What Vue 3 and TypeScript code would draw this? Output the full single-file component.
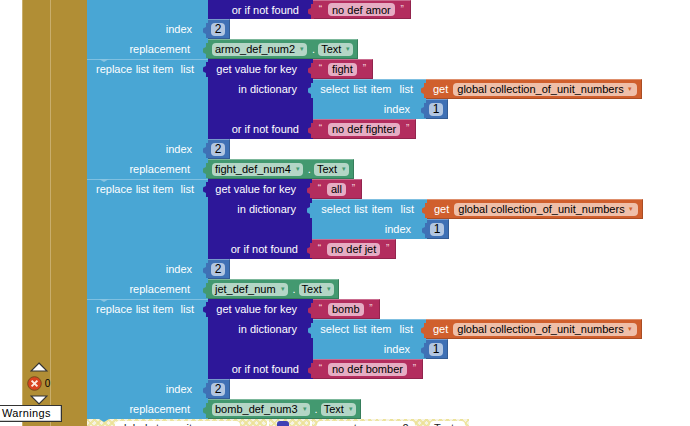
<script setup lang="ts">
interface Group {
  key: string;
  missing: string;
  field: string;
  dictWidth: number;
  selectWidth: number;
}

const groups: Group[] = [
  { key: 'fight', missing: 'no def fighter', field: 'fight_def_num4', dictWidth: 105, selectWidth: 113 },
  { key: 'all', missing: 'no def jet', field: 'jet_def_num', dictWidth: 104, selectWidth: 115 },
  { key: 'bomb', missing: 'no def bomber', field: 'bomb_def_num3', dictWidth: 105, selectWidth: 113 }
];

const tabPath = 'M7 0H4v3.5C4 5 1 4 1 6.5v2C1 11 4 10 4 11.5V15h3z';
</script>

<template>
  <div class="page">
    <div class="margin"></div>
    <div class="gold">
      <div class="gold-a"></div>
      <div class="gold-b"></div>
      <div class="warn-ctrl">
        <svg width="18" height="10" viewBox="0 0 18 10"><path d="M9 1 17 9H1z" fill="#fff" stroke="#333" stroke-width="1.2" /></svg>
        <div class="warn-count">
          <svg width="15" height="15" viewBox="0 0 15 15">
            <circle cx="7.5" cy="7.5" r="6.8" fill="#d8431f" stroke="#7c4a1c" />
            <path d="M4.6 4.6l5.8 5.8M10.4 4.6l-5.8 5.8" stroke="#fde8dc" stroke-width="2" />
          </svg>
          <span>0</span>
        </div>
        <svg width="18" height="10" viewBox="0 0 18 10"><path d="M1 1h16L9 9z" fill="#fff" stroke="#333" stroke-width="1.2" /></svg>
      </div>
      <div class="warn-tip">Warnings</div>
    </div>

    <div class="canvas">
      <div class="row top-row">
        <div class="label"></div>
        <div class="dict-end" style="width: 105px">
          <span class="dict-text">or if not found</span>
        </div>
        <div class="pink">
          <svg class="tab" viewBox="0 0 7 15"><path :d="tabPath" /></svg>
          <span class="quote">“</span><span class="field pink-field">no def amor</span><span class="quote">”</span>
        </div>
      </div>

      <div class="row">
        <div class="label">index</div>
        <div class="num">
          <svg class="tab" viewBox="0 0 7 15"><path :d="tabPath" /></svg>
          <span class="field num-field">2</span>
        </div>
      </div>
      <div class="row">
        <div class="label label-r">replacement</div>
        <div class="green">
          <svg class="tab" viewBox="0 0 7 15"><path :d="tabPath" /></svg>
          <span class="field green-field">armo_def_num2<i class="arrow">▾</i></span>
          <span class="dot">.</span>
          <span class="field green-field">Text<i class="arrow">▾</i></span>
        </div>
      </div>

      <template v-for="g in groups" :key="g.key">
        <div class="group">
          <div class="label group-label">
            <span class="notch"></span>
            <span class="replace-text">replace list item&nbsp; list</span>
          </div>
          <div class="dict" :style="{ width: g.dictWidth + 'px' }">
            <svg class="tab tab-dict" viewBox="0 0 7 15"><path :d="tabPath" /></svg>
            <span class="dict-text">get value for key</span>
            <span class="dict-text dict-mid">in dictionary</span>
            <span class="dict-text dict-last">or if not found</span>
          </div>
          <div class="dict-args">
            <div class="pink">
              <svg class="tab" viewBox="0 0 7 15"><path :d="tabPath" /></svg>
              <span class="quote">“</span><span class="field pink-field">{{ g.key }}</span><span class="quote">”</span>
            </div>
            <div class="select-line">
              <div class="select" :style="{ width: g.selectWidth + 'px' }">
                <svg class="tab tab-select" viewBox="0 0 7 15"><path :d="tabPath" /></svg>
                <span class="select-text select-first">select list item&nbsp; list</span>
                <span class="select-text">index</span>
              </div>
              <div class="select-args">
                <div class="orange">
                  <svg class="tab" viewBox="0 0 7 15"><path :d="tabPath" /></svg>
                  <span class="orange-get">get</span>
                  <span class="field orange-field">global collection_of_unit_numbers<i class="arrow arrow-o">▾</i></span>
                </div>
                <div class="num">
                  <svg class="tab" viewBox="0 0 7 15"><path :d="tabPath" /></svg>
                  <span class="field num-field">1</span>
                </div>
              </div>
            </div>
            <div class="pink">
              <svg class="tab" viewBox="0 0 7 15"><path :d="tabPath" /></svg>
              <span class="quote">“</span><span class="field pink-field">{{ g.missing }}</span><span class="quote">”</span>
            </div>
          </div>
        </div>
        <div class="row">
          <div class="label">index</div>
          <div class="num">
            <svg class="tab" viewBox="0 0 7 15"><path :d="tabPath" /></svg>
            <span class="field num-field">2</span>
          </div>
        </div>
        <div class="row">
          <div class="label label-r">replacement</div>
          <div class="green">
            <svg class="tab" viewBox="0 0 7 15"><path :d="tabPath" /></svg>
            <span class="field green-field">{{ g.field }}<i class="arrow">▾</i></span>
            <span class="dot">.</span>
            <span class="field green-field">Text<i class="arrow">▾</i></span>
          </div>
        </div>
      </template>

      <div class="disabled">
        <span class="notch notch-bottom"></span>
        <span class="field off-field off-a">global stop unit num</span>
        <span class="off-mark off-mark-a"></span>
        <span class="off-badge"></span>
        <span class="off-mark off-mark-b"></span>
        <span class="field off-field off-b">percentage_num2</span>
        <span class="field off-field off-c">Text</span>
      </div>
    </div>
  </div>
</template>

<style>
html,
body {
  margin: 0;
  background: #fff;
}
</style>

<style scoped>
.page {
  display: flex;
  width: 690px;
  height: 426px;
  overflow: hidden;
  background: #fff;
  font-family: "Liberation Sans", Arial, sans-serif;
  font-size: 11px;
  line-height: 20px;
  color: #000;
}

.margin {
  flex: 0 0 22px;
}

.gold {
  position: relative;
  display: flex;
  flex: 0 0 65px;
}

.gold-a {
  width: 29px;
  background: #b18e35;
  border-left: 1px solid #c9ae6c;
  box-sizing: border-box;
  border-right: 1px solid #c9ae6c;
}

.gold-b {
  flex: 1;
  background: #b18e35;
}

.warn-ctrl {
  position: absolute;
  left: 5px;
  top: 362px;
  display: flex;
  flex-direction: column;
  align-items: center;
  gap: 4px;
  width: 23px;
}

.warn-count {
  display: flex;
  align-items: center;
  height: 15px;
  gap: 3px;
  font-size: 10px;
}

.warn-tip {
  position: absolute;
  left: -22px;
  top: 405px;
  width: 62px;
  height: 17px;
  box-sizing: border-box;
  padding-left: 2px;
  background: #fff;
  border: 1px solid #333;
  border-left: 0;
  line-height: 15px;
  letter-spacing: 0.35px;
  box-shadow: inset -1px -1px 0 #ccc;
}

.canvas {
  display: flex;
  flex-direction: column;
  flex: 1;
}

.row,
.group {
  display: flex;
}

.row {
  height: 20px;
}

.top-row {
  height: 19px;
}

.label {
  position: relative;
  flex: 0 0 121px;
  box-sizing: border-box;
  padding-right: 16px;
  background: #49a6d4;
  color: #fff;
  text-align: right;
}

.label-r {
  padding-right: 18px;
}

.group-label {
  border-top: 1px solid #7fc0e1;
  padding-right: 14px;
  line-height: 19px;
}

.replace-text {
  display: block;
  white-space: nowrap;
  word-spacing: 0.5px;
}

.notch {
  position: absolute;
  left: 12px;
  top: -1px;
  width: 0;
  height: 0;
  border-left: 5px solid transparent;
  border-right: 5px solid transparent;
  border-top: 3px solid #8ac5e3;
}

.group {
  height: 80px;
}

.dict {
  position: relative;
  display: flex;
  flex-direction: column;
  align-items: flex-end;
  box-sizing: border-box;
  padding-right: 16px;
  background: #2d1799;
  color: #fff;
}

.dict-text {
  height: 20px;
  white-space: nowrap;
}

.dict-mid {
  height: 40px;
}

.dict-last {
  margin-right: -2px;
}

.dict-end {
  display: flex;
  justify-content: flex-end;
  box-sizing: border-box;
  padding-right: 14px;
  height: 19px;
  background: #2d1799;
  color: #fff;
}

.dict-args {
  display: flex;
  flex-direction: column;
  align-items: flex-start;
}

.tab {
  position: absolute;
  left: -6px;
  top: 3px;
  width: 7px;
  height: 15px;
  fill: currentColor;
}

.tab-dict {
  color: #2d1799;
}

.tab-select {
  color: #49a6d4;
}

.pink,
.num,
.green,
.orange {
  position: relative;
  display: flex;
  align-items: center;
  box-sizing: border-box;
  height: 20px;
  border-top: 1px solid rgba(255, 255, 255, 0.3);
  border-bottom: 1px solid rgba(0, 0, 0, 0.18);
  border-right: 1px solid rgba(0, 0, 0, 0.18);
}

.pink {
  background: #b32d5e;
  color: #b32d5e;
}

.top-row .pink {
  height: 19px;
}

.quote {
  width: 15px;
  text-align: center;
  font-size: 10px;
  color: #f3d5df;
  line-height: 14px;
  align-self: flex-start;
  margin-top: 2px;
}

.field {
  display: inline-flex;
  align-items: center;
  height: 13px;
  border-radius: 4px;
  color: #000;
  white-space: nowrap;
}

.pink-field {
  padding: 0 4px;
  background: #e6adc3;
}

.num {
  padding-left: 3px;
  width: 22px;
  background: #3f71b5;
  color: #3f71b5;
}

.num-field {
  justify-content: center;
  width: 14px;
  font-size: 12px;
  background: #b2c6e1;
}

.green {
  padding: 0 4px 0 4px;
  background: #439970;
  color: #439970;
}

.green-field {
  padding: 0 3px;
  background: #b4d6c6;
}

.arrow {
  margin-left: 5px;
  font-size: 7px;
  font-style: normal;
  color: #439970;
}

.arrow-o {
  color: #d05f2d;
  margin-left: 4px;
}

.dot {
  margin: 0 3px 0 5px;
  color: #fff;
}

.select-line {
  display: flex;
  height: 40px;
}

.select {
  position: relative;
  display: flex;
  flex-direction: column;
  align-items: flex-end;
  box-sizing: border-box;
  padding-right: 16px;
  background: #49a6d4;
  color: #fff;
  border-top: 1px solid #7fc0e1;
  line-height: 19px;
}

.select-text {
  height: 20px;
  white-space: nowrap;
}

.select-first {
  margin-right: -3px;
  word-spacing: 1px;
}

.select-args {
  display: flex;
  flex-direction: column;
  align-items: flex-start;
}

.orange {
  padding: 0 4px 0 7px;
  background: #d05f2d;
  color: #d05f2d;
}

.orange-get {
  margin-right: 5px;
  color: #fff;
}

.orange-field {
  padding: 0 5px 0 4px;
  background: #efbfa9;
}

.disabled {
  position: relative;
  display: flex;
  flex: 1;
  align-items: flex-start;
  width: 382px;
  padding-top: 2px;
  box-sizing: border-box;
  background:
    repeating-linear-gradient(45deg, rgba(236, 226, 150, 0.8) 0 2px, transparent 2px 5px),
    repeating-linear-gradient(-45deg, rgba(236, 226, 150, 0.8) 0 2px, transparent 2px 5px),
    #f6f3e2;
}

.notch-bottom {
  top: 0;
  left: 12px;
  border-top-color: #49a6d4;
}

.off-field {
  height: 14px;
  background: #fff;
  border-radius: 4px;
  color: #222;
}

.off-a {
  margin-left: 28px;
  width: 125px;
  padding-left: 3px;
  box-sizing: border-box;
}

.off-mark {
  width: 2px;
  height: 8px;
  background: #fff;
}

.off-mark-a {
  margin-left: 27px;
}

.off-mark-b {
  margin-left: 21px;
}

.off-badge {
  width: 12px;
  height: 8px;
  margin-left: 8px;
  background: #3f40b5;
  border-radius: 3px;
}

.off-b {
  margin-left: 5px;
  width: 98px;
  padding-left: 3px;
  box-sizing: border-box;
}

.off-c {
  margin-left: 15px;
  width: 35px;
  padding-left: 4px;
  box-sizing: border-box;
}
</style>
